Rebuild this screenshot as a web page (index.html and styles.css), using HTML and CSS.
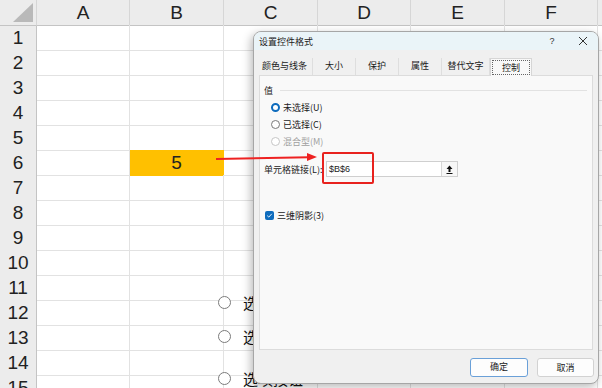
FILE: index.html
```html
<!DOCTYPE html>
<html lang="zh-CN">
<head>
<meta charset="utf-8">
<title>设置控件格式</title>
<link rel="stylesheet" href="styles.css">
</head>
<body>
<div class="sheet">
  <div class="row head">
    <div class="corner"><span class="tri"></span></div>
    <div class="ch">A</div><div class="ch">B</div><div class="ch">C</div><div class="ch">D</div><div class="ch">E</div><div class="ch">F</div><div class="ch"></div>
  </div>
  <div class="row"><div class="rh">1</div><div class="c"></div><div class="c"></div><div class="c"></div><div class="c"></div><div class="c"></div><div class="c"></div><div class="c"></div></div>
  <div class="row"><div class="rh">2</div><div class="c"></div><div class="c"></div><div class="c"></div><div class="c"></div><div class="c"></div><div class="c"></div><div class="c"></div></div>
  <div class="row"><div class="rh">3</div><div class="c"></div><div class="c"></div><div class="c"></div><div class="c"></div><div class="c"></div><div class="c"></div><div class="c"></div></div>
  <div class="row"><div class="rh">4</div><div class="c"></div><div class="c"></div><div class="c"></div><div class="c"></div><div class="c"></div><div class="c"></div><div class="c"></div></div>
  <div class="row"><div class="rh">5</div><div class="c"></div><div class="c"></div><div class="c"></div><div class="c"></div><div class="c"></div><div class="c"></div><div class="c"></div></div>
  <div class="row"><div class="rh">6</div><div class="c"></div><div class="c hl">5</div><div class="c"></div><div class="c"></div><div class="c"></div><div class="c"></div><div class="c"></div></div>
  <div class="row"><div class="rh">7</div><div class="c"></div><div class="c"></div><div class="c"></div><div class="c"></div><div class="c"></div><div class="c"></div><div class="c"></div></div>
  <div class="row"><div class="rh">8</div><div class="c"></div><div class="c"></div><div class="c"></div><div class="c"></div><div class="c"></div><div class="c"></div><div class="c"></div></div>
  <div class="row"><div class="rh">9</div><div class="c"></div><div class="c"></div><div class="c"></div><div class="c"></div><div class="c"></div><div class="c"></div><div class="c"></div></div>
  <div class="row"><div class="rh">10</div><div class="c"></div><div class="c"></div><div class="c"></div><div class="c"></div><div class="c"></div><div class="c"></div><div class="c"></div></div>
  <div class="row"><div class="rh">11</div><div class="c"></div><div class="c"></div><div class="c"></div><div class="c"></div><div class="c"></div><div class="c"></div><div class="c"></div></div>
  <div class="row"><div class="rh">12</div><div class="c"></div><div class="c"></div><div class="c"></div><div class="c"></div><div class="c"></div><div class="c"></div><div class="c"></div></div>
  <div class="row"><div class="rh">13</div><div class="c"></div><div class="c"></div><div class="c"></div><div class="c"></div><div class="c"></div><div class="c"></div><div class="c"></div></div>
  <div class="row"><div class="rh">14</div><div class="c"></div><div class="c"></div><div class="c"></div><div class="c"></div><div class="c"></div><div class="c"></div><div class="c"></div></div>
  <div class="row"><div class="rh">15</div><div class="c"></div><div class="c"></div><div class="c"></div><div class="c"></div><div class="c"></div><div class="c"></div><div class="c"></div></div>
</div>

<div class="opt opt1"><span class="ocircle"></span><span class="otext">选项按钮</span></div>
<div class="opt opt2"><span class="ocircle"></span><span class="otext">选项按钮</span></div>
<div class="opt opt3"><span class="ocircle"></span><span class="otext">选项按钮</span></div>

<svg class="arrow" width="110" height="16" viewBox="0 0 110 16">
  <line x1="2" y1="9" x2="95" y2="7.2" stroke="#ee2222" stroke-width="2"/>
  <polygon points="93,3 103,7 93,11" fill="#ee2222"/>
</svg>

<div class="dialog">
  <div class="titlebar">
    <span class="title">设置控件格式</span>
    <span class="help">?</span>
    <svg class="close" width="10" height="10" viewBox="0 0 10 10"><path d="M1 1L9 9M9 1L1 9" stroke="#333" stroke-width="1"/></svg>
  </div>
  <div class="tabs">
    <div class="tab t1">颜色与线条</div>
    <div class="tab t2">大小</div>
    <div class="tab t2">保护</div>
    <div class="tab t2">属性</div>
    <div class="tab t3">替代文字</div>
    <div class="tab active"><span>控制</span></div>
  </div>
  <div class="panel">
    <div class="group"><span>值</span><span class="gline"></span></div>
    <div class="radio"><span class="rc on"></span>未选择(U)</div>
    <div class="radio"><span class="rc"></span>已选择(C)</div>
    <div class="radio dis"><span class="rc"></span>混合型(M)</div>
    <div class="link">
      <span class="lbl">单元格链接(L):</span>
      <div class="input"><span class="val">$B$6</span>
        <span class="ibtn"><svg width="7" height="9" viewBox="0 0 7 9"><path d="M3.5 0.5L6.5 4H4.5V7H2.5V4H0.5Z" fill="#111"/><rect x="0.5" y="8" width="6" height="1" fill="#111"/></svg></span>
      </div>
    </div>
    <div class="check"><span class="cb"><svg width="7" height="7" viewBox="0 0 7 7"><path d="M1.2 3.6L2.8 5.1L5.8 1.8" stroke="#fff" stroke-width="0.9" fill="none"/></svg></span>三维阴影(3)</div>
  </div>
  <div class="buttons">
    <div class="btn ok">确定</div>
    <div class="btn">取消</div>
  </div>
</div>

<div class="redbox"></div>
</body>
</html>
```
FILE: styles.css
```css
html, body {
  margin: 0;
  padding: 0;
  background: #ffffff;
  overflow: hidden;
}
body {
  width: 602px;
  height: 388px;
  position: relative;
  font-family: "Liberation Sans", "Noto Sans CJK SC", sans-serif;
}

/* spreadsheet */
.sheet {
  display: flex;
  flex-direction: column;
}
.row {
  display: grid;
  grid-template-columns: 37px 93px 94px 94px 93px 94px 93px 40px;
  height: 25px;
}
.row > div {
  box-sizing: border-box;
  border-right: 1px solid #e2e2e2;
  border-bottom: 1px solid #e2e2e2;
}
.head > div {
  background: #ececec;
  border-right: 1px solid #d6d6d6;
  border-bottom: 1px solid #c4c4c4;
}
.corner {
  position: relative;
}
.tri {
  position: absolute;
  right: 3px;
  bottom: 3px;
  width: 0;
  height: 0;
  border-left: 20px solid transparent;
  border-bottom: 19px solid #b9b9b9;
}
.ch {
  font-size: 19px;
  color: #222;
  text-align: center;
  line-height: 25px;
}
.row > .rh {
  background: #ececec;
  border-right: 1px solid #c4c4c4;
  border-bottom: 1px solid #d6d6d6;
  font-size: 19px;
  color: #222;
  text-align: center;
  line-height: 25px;
}
.row > .hl {
  background: #ffc000;
  border-color: #ffc000;
  font-size: 19px;
  text-align: center;
  line-height: 25px;
  color: #222;
}

/* option buttons floating on the sheet */
.opt {
  position: absolute;
  left: 218px;
  display: flex;
  align-items: center;
  gap: 12px;
  font-family: "Noto Sans CJK SC", sans-serif;
  font-size: 15px;
  color: #111;
  white-space: nowrap;
}
.opt1 { top: 292px; }
.opt2 { top: 326px; }
.opt3 { top: 368px; }
.ocircle {
  width: 11px;
  height: 11px;
  border: 1.5px solid #7b7b7b;
  border-radius: 50%;
  background: #fff;
}

.arrow {
  position: absolute;
  left: 214px;
  top: 150px;
  z-index: 3;
}

/* dialog */
.dialog {
  position: absolute;
  left: 253px;
  top: 31px;
  width: 346px;
  height: 353px;
  box-sizing: border-box;
  border: 1px solid #a6a6a6;
  border-radius: 8px;
  overflow: hidden;
  background: #f0f0f0;
  box-shadow: -2px 3px 10px rgba(0, 0, 0, 0.28);
  font-family: "Noto Sans CJK SC", sans-serif;
  font-size: 9px;
  color: #1a1a1a;
  display: flex;
  flex-direction: column;
  z-index: 2;
}
.titlebar {
  height: 18px;
  background: #eaf4f8;
  display: flex;
  align-items: center;
  padding-left: 5px;
}
.title {
  flex: 1;
}
.help {
  width: 12px;
  text-align: center;
  color: #333;
  font-family: "Liberation Sans", sans-serif;
  font-size: 9px;
}
.close {
  margin-left: 20px;
  margin-right: 10px;
}
.tabs {
  display: flex;
  margin-top: 8px;
  margin-left: 3px;
  height: 17px;
  position: relative;
  z-index: 1;
}
.tab {
  box-sizing: border-box;
  height: 17px;
  line-height: 16px;
  text-align: center;
  border-right: 1px solid #dedede;
}
.t1 { width: 56px; }
.t2 { width: 43px; }
.t3 { width: 48px; }
.tab.active {
  width: 42px;
  background: #f9f9f9;
  border: 1px solid #d6d6d6;
  border-bottom: none;
  height: 18px;
  padding: 1px;
}
.tab.active span {
  display: block;
  height: 15px;
  line-height: 14px;
  box-sizing: border-box;
  border: 1px dotted #666;
}
.panel {
  margin: 0 5px;
  height: 275px;
  box-sizing: border-box;
  background: #f9f9f9;
  border: 1px solid #dcdcdc;
  padding: 6px 4px 0 4px;
}
.group {
  display: flex;
  align-items: center;
  height: 17px;
}
.gline {
  flex: 1;
  height: 1px;
  background: #e2e2e2;
  margin-left: 7px;
  margin-right: 1px;
}
.radio {
  display: flex;
  align-items: center;
  height: 17px;
  padding-left: 7px;
}
.rc {
  width: 9px;
  height: 9px;
  box-sizing: border-box;
  border: 1px solid #7a7a7a;
  border-radius: 50%;
  background: #fff;
  margin-right: 3px;
}
.rc.on {
  border: 2.5px solid #0f6cbd;
}
.radio.dis {
  color: #a0a0a0;
}
.radio.dis .rc {
  border-color: #c6c6c6;
}
.link {
  display: flex;
  align-items: center;
  margin-top: 11px;
  height: 16px;
}
.lbl {
  width: 62px;
}
.input {
  width: 132px;
  height: 16px;
  box-sizing: border-box;
  border: 1px solid #cfcfcf;
  background: #fff;
  display: flex;
  align-items: center;
}
.val {
  flex: 1;
  padding-left: 2px;
  font-family: "Liberation Sans", sans-serif;
  font-size: 9px;
}
.ibtn {
  width: 15px;
  height: 14px;
  border-left: 1px solid #d6d6d6;
  background: #f7f7f7;
  display: flex;
  align-items: center;
  justify-content: center;
}
.check {
  display: flex;
  align-items: center;
  height: 17px;
  margin-top: 30px;
  padding-left: 1px;
}
.cb {
  width: 9px;
  height: 9px;
  border-radius: 2px;
  background: #0f6cbd;
  margin-right: 3px;
  display: flex;
  align-items: center;
  justify-content: center;
}
.buttons {
  display: flex;
  justify-content: flex-end;
  gap: 9px;
  padding: 8px 4px 0 0;
}
.btn {
  width: 57px;
  height: 19px;
  box-sizing: border-box;
  border: 1px solid #d2d2d2;
  border-radius: 3px;
  background: #fdfdfd;
  text-align: center;
  line-height: 17px;
}
.btn.ok {
  width: 58px;
  border: 1.5px solid #6aa0d8;
  line-height: 16px;
}

.redbox {
  position: absolute;
  left: 322px;
  top: 152px;
  width: 52px;
  height: 32px;
  box-sizing: border-box;
  border: 2px solid #e8221e;
  border-radius: 2px;
  z-index: 4;
}
```
